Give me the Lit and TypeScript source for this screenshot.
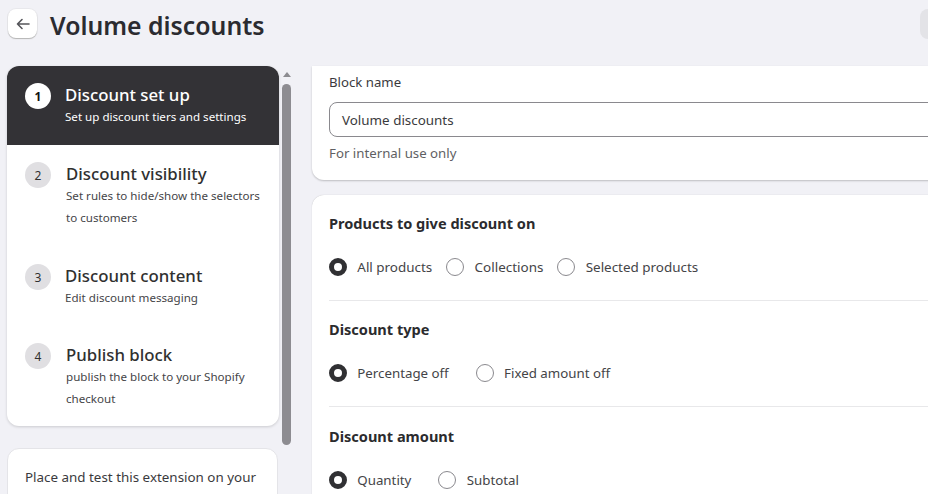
import { LitElement, html, css } from "lit";
import { customElement } from "lit/decorators.js";

const steps = [
  { n: 1, title: "Discount set up", lines: ["Set up discount tiers and settings"], cls: "active" },
  { n: 2, title: "Discount visibility", lines: ["Set rules to hide/show the selectors", "to customers"], cls: "s2" },
  { n: 3, title: "Discount content", lines: ["Edit discount messaging"], cls: "s3" },
  { n: 4, title: "Publish block", lines: ["publish the block to your Shopify", "checkout"], cls: "s4" },
];

const groups = [
  { title: "Products to give discount on", opts: ["All products", "Collections", "Selected products"], cls: "first" },
  { title: "Discount type", opts: ["Percentage off", "Fixed amount off"], cls: "wide" },
  { title: "Discount amount", opts: ["Quantity", "Subtotal"], cls: "wide last" },
];

@customElement("app-root")
export class AppRoot extends LitElement {
  static styles = css`
    :host {
      display: block;
      width: 928px;
      height: 494px;
      overflow: hidden;
      background: #f1f1f6;
      font-family: "Noto Sans", "Open Sans", sans-serif;
      color: #303030;
    }
    .header {
      height: 66px;
      display: flex;
      align-items: flex-start;
      box-sizing: border-box;
      padding: 9px 0 0 8px;
    }
    .back {
      width: 29px;
      height: 29px;
      box-sizing: border-box;
      background: #fff;
      border-radius: 8px;
      box-shadow: 0 1px 1px #b5b5b5, 0 0 0 1px #e8e8ec;
      display: flex;
      align-items: center;
      justify-content: center;
    }
    h1 {
      margin: 0 0 0 13px;
      font-size: 24.8px;
      line-height: 32px;
      font-weight: 600;
      color: #2b2b30;
    }
    .spacer { flex: 1; }
    .ghost {
      width: 8px;
      height: 30px;
      background: #e3e3e7;
      border-radius: 8px 0 0 8px;
    }
    .body {
      display: flex;
      align-items: flex-start;
    }
    .side {
      margin-left: 7px;
      width: 272px;
      flex: none;
    }
    .stepper {
      background: #fff;
      border-radius: 12px;
      overflow: hidden;
      box-shadow: 0 1px 3px rgba(0, 0, 0, 0.16);
    }
    .step {
      display: flex;
      box-sizing: border-box;
      padding-left: 18px;
      padding-top: 17px;
    }
    .step.active { height: 79px; background: #333236; color: #fff; }
    .step.s2 { height: 102px; }
    .step.s3 { height: 79px; }
    .step.s4 { height: 100px; }
    .num {
      width: 26px;
      height: 26px;
      border-radius: 50%;
      background: #e0dfe2;
      color: #303030;
      font-size: 12px;
      display: flex;
      align-items: center;
      justify-content: center;
      flex: none;
    }
    .active .num { background: #fff; color: #111; font-weight: 700; }
    .txt { margin-left: 15px; }
    .active .txt, .s3 .txt { margin-left: 14px; }
    .t {
      font-size: 16.8px;
      line-height: 23px;
      font-weight: 500;
      white-space: nowrap;
    }
    .active .t { line-height: 24px; }
    .d {
      font-size: 11.6px;
      line-height: 22px;
      white-space: nowrap;
      color: #454548;
    }
    .active .d { color: #fff; line-height: 20px; }
    .note {
      margin-top: 22px;
      height: 80px;
      width: 271px;
      box-sizing: border-box;
      background: #fff;
      border: 1px solid #e4e4e8;
      border-radius: 12px;
      padding: 18px 17px;
      font-size: 13.4px;
      line-height: 20px;
      white-space: nowrap;
      color: #3a3a3d;
    }
    .bar {
      margin-left: 3px;
      width: 9px;
      flex: none;
      display: flex;
      flex-direction: column;
      align-items: center;
    }
    .arrow {
      margin-top: 6px;
      width: 0;
      height: 0;
      border-left: 4.5px solid transparent;
      border-right: 4.5px solid transparent;
      border-bottom: 5px solid #8d8c91;
    }
    .thumb {
      margin-top: 7px;
      width: 9px;
      height: 361px;
      border-radius: 5px;
      background: #8d8c91;
    }
    .main {
      margin-left: 21px;
      width: 700px;
      flex: none;
    }
    .card {
      background: #fff;
      border-radius: 12px;
      box-shadow: 0 1px 2px rgba(0, 0, 0, 0.22);
      box-sizing: border-box;
      padding: 0 17px;
    }
    .card.name {
      height: 114px;
      border-radius: 0 0 0 12px;
      padding-top: 6px;
    }
    .label, .help, .input, .opt {
      white-space: nowrap;
    }
    .label { font-size: 13.2px; line-height: 20px; color: #3a3a3d; }
    .input {
      margin-top: 10px;
      height: 35px;
      box-sizing: border-box;
      border: 1px solid #8a898e;
      border-radius: 8px;
      padding: 1px 12px 0;
      font-size: 13.4px;
      line-height: 33px;
      color: #3a3a3d;
    }
    .help { font-size: 13.25px; margin-top: 6px; line-height: 20px; color: #5f5f63; }
    .card.form {
      margin-top: 15px;
      height: 320px;
      border-radius: 12px 0 0 0;
      box-shadow: 0 0 1px rgba(0, 0, 0, 0.25);
    }
    .group { height: 106px; box-sizing: border-box; padding-top: 17px; border-bottom: 1px solid #e8e8ea; }
    .group.last { border: none; padding-top: 18px; }
    h2 {
      margin: 0;
      font-size: 14.55px;
      line-height: 22px;
      font-weight: 700;
      color: #2b2b2e;
    }
    .opts {
      margin-top: 23px;
      display: flex;
      height: 20px;
      align-items: center;
    }
    .opt { display: flex; align-items: center; color: #444447; margin-right: 14px; font-size: 13.45px; }
    .wide .opt { margin-right: 27px; font-size: 13.3px; }
    .radio {
      width: 18px;
      height: 18px;
      box-sizing: border-box;
      border: 1px solid #8a898e;
      border-radius: 50%;
      margin-right: 10.3px;
      background: #fff;
    }
    .radio.on { border: 5px solid #303033; }
  `;

  render() {
    return html`
      <div class="header">
        <div class="back">
          <svg width="16" height="16" viewBox="0 0 16 16" fill="none" stroke="#55555a" stroke-width="1.6" stroke-linecap="round" stroke-linejoin="round">
            <path d="M14 8H2.5M7 3.5 2.5 8 7 12.5" />
          </svg>
        </div>
        <h1>Volume discounts</h1>
        <div class="spacer"></div>
        <div class="ghost"></div>
      </div>
      <div class="body">
        <div class="side">
          <div class="stepper">
            ${steps.map(
              (s) => html`<div class="step ${s.cls}">
                <div class="num">${s.n}</div>
                <div class="txt">
                  <div class="t">${s.title}</div>
                  ${s.lines.map((l) => html`<div class="d">${l}</div>`)}
                </div>
              </div>`
            )}
          </div>
          <div class="note">Place and test this extension on your</div>
        </div>
        <div class="bar"><div class="arrow"></div><div class="thumb"></div></div>
        <div class="main">
          <div class="card name">
            <div class="label">Block name</div>
            <div class="input">Volume discounts</div>
            <div class="help">For internal use only</div>
          </div>
          <div class="card form">
            ${groups.map(
              (g) => html`<div class="group ${g.cls}">
                <h2>${g.title}</h2>
                <div class="opts">
                  ${g.opts.map(
                    (o, j) => html`<div class="opt"><span class="radio ${j === 0 ? "on" : ""}"></span>${o}</div>`
                  )}
                </div>
              </div>`
            )}
          </div>
        </div>
      </div>
    `;
  }
}
